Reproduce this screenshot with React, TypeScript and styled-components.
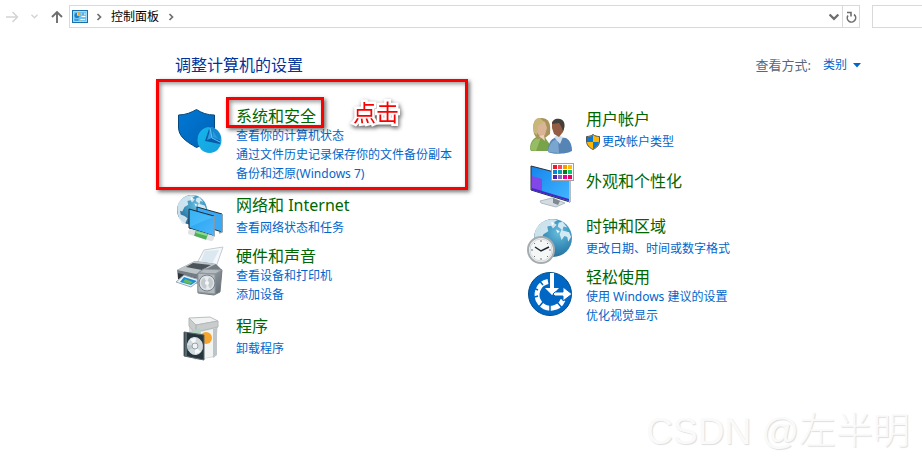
import React from "react";
import styled, { createGlobalStyle } from "styled-components";

const GlobalStyle = createGlobalStyle`
  * { box-sizing: border-box; }
  body {
    margin: 0;
    background: #fff;
    font-family: "Noto Sans", "Noto Sans CJK SC", sans-serif;
    font-size: 12px;
    overflow-x: hidden;
  }
  button, input, a { font: inherit; }
`;

const Page = styled.div`
  position: relative;
  min-height: 100vh;
  overflow: hidden;
`;

const Toolbar = styled.header`
  display: flex;
  align-items: center;
  padding-top: 5px;
`;

const IconButton = styled.button<{ $width: number }>`
  display: flex;
  align-items: center;
  justify-content: center;
  flex: none;
  width: ${(p) => p.$width}px;
  height: 22px;
  padding: 0;
  border: 0;
  background: none;
  color: #6e6e6e;
  &:disabled { color: #d4d4d4; }
`;

const AddressBar = styled.nav`
  display: flex;
  align-items: center;
  flex: 1;
  min-width: 0;
  height: 23px;
  border: 1px solid #d9d9d9;
`;

const Crumb = styled.button`
  height: 20px;
  padding: 0 4px;
  border: 0;
  background: none;
  color: #000;
  line-height: 20px;
  white-space: nowrap;
`;

const Refresh = styled.div`
  height: 21px;
  margin-left: auto;
  display: flex;
  button:last-child { border-left: 1px solid #d9d9d9; }
`;

const Search = styled.input`
  flex: none;
  width: 50px;
  height: 23px;
  margin-left: 12px;
  border: 1px solid #d9d9d9;
  border-right: 0;
  outline: 0;
`;

const Main = styled.main`
  padding: 27px 61px 0 175px;
`;

const Heading = styled.div`
  display: flex;
  align-items: center;
  justify-content: space-between;
  height: 20px;
  h1 {
    margin: 0;
    color: #003399;
    font-size: 16px;
    font-weight: 400;
    line-height: 20px;
    white-space: nowrap;
  }
`;

const ViewBy = styled.div`
  display: flex;
  align-items: center;
  gap: 12px;
  color: #5a6779;
  font-size: 13px;
  line-height: 18px;
  white-space: nowrap;
  button {
    display: flex;
    align-items: center;
    gap: 6px;
    padding: 0;
    border: 0;
    background: none;
    color: #0066cc;
    font-size: 12px;
  }
`;

const Columns = styled.div`
  display: grid;
  grid-template-columns: 350px 1fr;
  padding-top: 32px;
`;

const Column = styled.div<{ $top?: number }>`
  padding-top: ${(p) => p.$top ?? 0}px;
`;

const Category = styled.section<{ $space?: number }>`
  position: relative;
  display: flex;
  gap: 12px;
  margin-top: ${(p) => p.$space ?? 0}px;
  > svg { flex: none; margin-left: 1px; }
`;

const Body = styled.div<{ $top?: number; $gap?: number }>`
  display: flex;
  flex-direction: column;
  align-items: flex-start;
  padding-top: ${(p) => p.$top ?? 0}px;
  h2 {
    margin: 0 0 ${(p) => p.$gap ?? 0}px;
    font-size: 16px;
    font-weight: 400;
    line-height: 19px;
  }
`;

const TitleLink = styled.a`
  color: #006600;
  text-decoration: none;
  white-space: nowrap;
`;

const TaskLink = styled.a`
  display: flex;
  align-items: center;
  gap: 2px;
  color: #0066cc;
  line-height: 19px;
  text-decoration: none;
  white-space: nowrap;
`;

const Frame = styled.div`
  position: absolute;
  border: 3px solid #fa0000;
  box-shadow: 2px 2px 4px rgba(0, 0, 0, 0.55), inset 2px 2px 4px rgba(0, 0, 0, 0.4);
  pointer-events: none;
`;

const GroupFrame = styled(Frame)`
  left: -19px;
  top: -28px;
  width: 312px;
  height: 111px;
`;

const TitleFrame = styled(Frame)`
  left: 51px;
  top: -10px;
  width: 98px;
  height: 31px;
`;

const Callout = styled.span`
  position: absolute;
  left: 178px;
  top: -10px;
  color: #fa0000;
  font-size: 23px;
  line-height: 30px;
  -webkit-text-stroke: 5px #fff;
  paint-order: stroke fill;
  filter: drop-shadow(1px 2px 2px rgba(0, 0, 0, 0.65));
`;

const Watermark = styled.div`
  position: absolute;
  right: 12px;
  bottom: 7px;
  color: #fafafa;
  font-family: "Liberation Sans", "Noto Sans CJK SC", sans-serif;
  font-size: 37px;
  font-weight: 300;
  line-height: 44px;
  text-shadow: 1px 1px 1px #dedede;
  white-space: nowrap;
`;

const Chevron = ({ down = false, size = 8 }: { down?: boolean; size?: number }) => (
  <svg width={size} height={size} viewBox="0 0 8 8" fill="none" stroke="currentColor" strokeWidth="1.7">
    <path d={down ? "M.5 2l3.5 3.5L7.500 2" : "M2.500 1L5.500 4 2.500 7"} />
  </svg>
);

const PanelIcon = () => (
  <svg width="16" height="13" viewBox="0 0 16 13">
    <rect x=".5" y=".5" width="15" height="12" fill="#69c4f5" stroke="#176fae" />
    <path d="M1.500 1.500h13v10h-13z" fill="none" stroke="#9cddfc" />
    <circle cx="5" cy="5.500" r="2.800" fill="#fff" />
    <path d="M5 5.500V2.700A2.800 2.800 0 1 0 7.800 5.500z" fill="#1c7fc7" />
    <path d="M5.500 5V2A3 3 0 0 1 8.300 5z" fill="#f8a729" />
    <path d="M9.500 4h4M9.500 6.500h4M8 9.500h5" stroke="#fff" />
    <path d="M10 4h2M2.500 10h4" stroke="#1671b2" />
    <path d="M7 10h2" stroke="#f8a729" />
  </svg>
);

const SecurityIcon = () => (
  <svg width="48" height="48" viewBox="0 0 48 48">
    <defs>
      <linearGradient id="shield" x2="1" y2="1"><stop stopColor="#0079d6" /><stop offset="1" stopColor="#0062b5" /></linearGradient>
      <linearGradient id="disk" x2="1" y2="1"><stop stopColor="#15b5eb" /><stop offset="1" stopColor="#16a0dc" /></linearGradient>
    </defs>
    <path d="M2.500 8C10 8 16 5 20.500 2.500 26 6 31 8 38.500 8v12c0 10-7 16-18 20.500C9 34 2.500 29 2.500 20z" fill="url(#shield)" stroke="#06487c" />
    <ellipse cx="33.500" cy="33" rx="12" ry="13" fill="url(#disk)" />
    <path d="M33 20l2 13 10-1c-1-7-5-12-12-12z" fill="#1687cf" />
    <path d="M33 22l-4 12 15 3v-4l-9-2z" fill="#075ba8" />
    <path d="M34 23l2 8-5 2zM37 24l5 8-5-2z" fill="#2b9ae0" />
    <path d="M34 21l2 10 8 4" stroke="#5cc4f5" fill="none" />
  </svg>
);

const Globe = ({ x, y, r }: { x: number; y: number; r: number }) => (
  <g transform={`translate(${x - r} ${y - r}) scale(${r / 20})`}>
    <circle cx="20" cy="20" r="20" fill="url(#globe)" />
    <path d="M3 9C9 1 18-1 25 1l-5 3 4 2-4 4-2-3-4 1 1 5-5 3-3 6-3-1 1 5 5 2 4 3-3 7-4 1C-1 25-1 16 3 9z" fill="#ddecf4" opacity=".9" />
    <path d="M26 4l4-1 5 6-4-1-1 4 7 2 2 5-3 5-1-5-3-1-3 4-2-6 2-5-4-3z" fill="#d5e9f3" />
    <path d="M18 3l4 1-3 3zM23 11l4 2-2 2z" fill="#f5fbff" />
  </g>
);

const GlobeGradient = () => (
  <defs><radialGradient id="globe" cx=".65" cy=".35" r=".7"><stop stopColor="#68bdde" /><stop offset=".65" stopColor="#3287b4" /><stop offset="1" stopColor="#2a6b92" /></radialGradient></defs>
);

const NetworkIcon = () => (
  <svg width="48" height="48" viewBox="0 0 48 48">
    <GlobeGradient />
    <defs><linearGradient id="screen" x2="1" y2="1"><stop stopColor="#1aa3ef" /><stop offset="1" stopColor="#4fb5fb" /></linearGradient></defs>
    <Globe x={16} y={16} r={15} />
    <path d="M21 13l25 7v18l-25-8z" fill="#39a9f4" stroke="#22313b" />
    <path d="M46 20v18l-3 1" fill="none" stroke="#93a5ae" strokeWidth="1.500" />
    <path d="M13 15l25 7v20L13 34z" fill="url(#screen)" stroke="#1c2e3a" />
    <path d="M14 16l23 7-23 10z" fill="#6bd0ff" opacity=".35" />
    <path d="M38 22v20l-2 1" fill="none" stroke="#9eacb4" strokeWidth="1.500" />
    <path d="M15 38l20 6" stroke="#dee2e4" strokeWidth="6" strokeLinecap="round" />
    <path d="M19 39l12 4" stroke="#4fae5a" strokeWidth="6" />
    <path d="M20 38l11 3" stroke="#8bdb8c" strokeWidth="2" />
  </svg>
);

const HardwareIcon = () => (
  <svg width="48" height="52" viewBox="0 0 48 52">
    <defs><linearGradient id="metal" x2="1" y2="1"><stop stopColor="#acb4b8" /><stop offset="1" stopColor="#5e676e" /></linearGradient></defs>
    <path d="M20 20l8-15 19-3-8 23z" fill="#f4f8fa" stroke="#c3ccd2" />
    <path d="M29 6l14-1-7 14-12-1z" fill="#dce8ef" />
    <path d="M1 25l18-9 21 3 6 6-2 9-26 5-16-5z" fill="#737c83" />
    <path d="M1 25l18-9 21 3-20 10z" fill="#bdc4c7" />
    <path d="M17 18l18 2-9 5-16-3z" fill="#4b545a" />
    <path d="M2 28l18 5v6L2 34z" fill="#30363a" />
    <path d="M8 30l16 5-9 7-15-5z" fill="#e7f3fa" stroke="#9baab2" />
    <path d="M8 32l13 4-6 4-11-3z" fill="#198cd8" />
    <path d="M9 34l8 3-3 2-7-2z" fill="#67bc59" />
    <path d="M22 28l6-4 18 1-2 22-6 3-16-2z" fill="url(#metal)" stroke="#737c82" />
    <path d="M22 28l17 1v20l-17-2zM22 28l6-4 18 1-7 4z" fill="#b4bbc0" stroke="#8d969b" />
    <circle cx="31" cy="38" r="8" fill="#dce2e5" stroke="#778087" />
    <circle cx="31" cy="38" r="6" fill="#c3cacd" />
    <path d="M31 38l-3-6 5 0zM31 38l3 6-4 0z" fill="#e8ecee" />
    <circle cx="31" cy="38" r="2" fill="#f6f7f7" />
  </svg>
);

const ProgramsIcon = () => (
  <svg width="48" height="48" viewBox="0 0 48 48">
    <path d="M13 3l7 6h22l-3 33-19 3-7-4z" fill="#d6d9db" />
    <path d="M13 3l21-1 8 4-22 4z" fill="#f1f2f2" stroke="#bbbec0" />
    <path d="M13 3l7 7v9l-7-8zM20 10l22-4v6l-22 5z" fill="#c8cccd" stroke="#b3b8bb" />
    <path d="M20 18l18-4v27l-18 4z" fill="#f2f3f3" />
    <path d="M37 14l4-1v27l-4 3z" fill="#bec4c8" />
    <path d="M14 17l10-4 3 15-14 2z" fill="#b3d3c0" />
    <circle cx="30" cy="23" r="6" fill="#f5a42e" />
    <path d="M8 17l20 3v25L8 41z" fill="#26343c" stroke="#59656d" />
    <path d="M10 18v23" stroke="#8a989f" />
    <ellipse cx="19" cy="31" rx="8" ry="9" transform="rotate(-8 19 31)" fill="#d3dadd" />
    <path d="M19 31l-5-7 6-1zM19 31l6 6-6 2z" fill="#f5f8f9" />
    <path d="M19 31l-7 5-1-6z" fill="#b7c8cf" />
    <circle cx="19" cy="31" r="3" fill="#f0f2f3" stroke="#98a1a5" />
  </svg>
);

const UsersIcon = () => (
  <svg width="48" height="48" viewBox="0 -2 48 48">
    <path d="M4 37c0-8 4-12 10-13h4l9 13-1 2H5z" fill="#78a349" />
    <path d="M4 38c1-8 4-12 11-13l-5 14z" fill="#97bc63" />
    <path d="M8 22C6 12 8 6 15 6c8 0 10 5 9 16l-5 4-8 1z" fill="#a8935b" />
    <path d="M10 13c2-4 6-5 9-3l2 6-2 7-4 3-5-7z" fill="#d9b497" />
    <path d="M8 21C6 12 8 6 14 6l4 4-6 4-1 9z" fill="#c7b778" />
    <path d="M13 24l5-1 1 6z" fill="#f1d0b6" />
    <path d="M22 40c0-11 4-14 10-15l8 1c4 2 6 7 6 13-5 3-19 4-24 1z" fill="#5684b5" />
    <path d="M22 40c1-8 4-12 10-13l1 14z" fill="#7aa5d0" />
    <path d="M28 25l4-2 5 2-3 7z" fill="#cddfef" />
    <path d="M26 12c0-4 4-5 7-5 6 1 6 8 4 13l-4 5-5-3-2-6z" fill="#925d42" />
    <path d="M26 12c0-4 4-6 8-5 6 1 5 9 3 12l-2-5-2-3z" fill="#443f3b" />
  </svg>
);

const DisplayIcon = () => {
  const colors = ["#ea1b2d", "#ff4550", "#ff9700", "#ffbd00", "#0a85d1", "#00a2b8", "#087b22", "#00ca70", "#5226b4", "#8769c1", "#e700a1", "#f00057"];
  return (
    <svg width="48" height="48" viewBox="-1 -1 48 48">
      <defs><linearGradient id="display" x2="1" y2="1"><stop stopColor="#1484ec" /><stop offset="1" stopColor="#43b8ff" /></linearGradient></defs>
      <path d="M13 39l12-3 13 5-9 4-15-4z" fill="#d5dce1" stroke="#aebac2" />
      <path d="M26 36l7 3-2 4-5-2z" fill="#7e8992" />
      <path d="M4 4l39 10v26L4 28z" fill="url(#display)" stroke="#26333c" />
      <path d="M43 14v25l-1 1" fill="none" stroke="#b4bdc2" strokeWidth="2" />
      <path d="M5 14l10 3v14L5 28z" fill="#8147e8" />
      <path d="M5 26l37 11v2L5 28z" fill="#4326c4" />
      <rect x="24.500" y="1.500" width="22" height="17" fill="#fff" stroke="#a1a1a1" />
      {colors.map((color, index) => <rect key={color} x={26 + (index % 4) * 5} y={3 + Math.floor(index / 4) * 5} width="4" height="4" fill={color} />)}
    </svg>
  );
};

const ClockIcon = () => (
  <svg width="48" height="48" viewBox="0 0 48 48">
    <GlobeGradient />
    <Globe x={27} y={21} r={19} />
    <circle cx="15" cy="33" r="13" fill="#f5f6f6" stroke="#a5acb0" strokeWidth="2" />
    <circle cx="15" cy="33" r="11" fill="none" stroke="#d4d8da" />
    <path d="M15 23v2M15 41v2M5 33h2M23 33h2M8 26l1 1M22 26l-1 1M8 40l1-1M22 40l-1-1" stroke="#777" />
    <path d="M9 30l6 4 8-4" fill="none" stroke="#1c2730" strokeWidth="1.500" />
  </svg>
);

const EaseIcon = () => (
  <svg width="48" height="48" viewBox="0 0 48 48">
    <circle cx="24" cy="26" r="21.500" fill="#0067c5" stroke="#024d88" />
    <path d="M22 13.500A13.500 13.500 0 1 0 37 32" fill="none" stroke="#fff" strokeWidth="5" />
    <path d="M24 36v8M17 34l-5 6M12 28l-7 2M12 22l-7-3M17 17l-5-6M31 34l5 6" stroke="#0067c5" strokeWidth="1.500" />
    <path d="M24 5h4v15h5l-7 7-7-7h5z" fill="#fff" />
    <path d="M29 24h8v-5l9 7-9 7v-5h-8l-2-2z" fill="#fff" stroke="#0067c5" />
  </svg>
);

const UacShield = () => (
  <svg width="14" height="16" viewBox="0 0 14 16">
    <path d="M7 .5c2 1.500 4 2 6.500 2V7c0 4-2.500 6.500-6.500 8.500C3 13.500.5 11 .5 7V2.500C3 2.500 5 2 7 .5z" fill="#ffb600" stroke="#495465" />
    <path d="M1 3C4 3 5.500 2.500 7 1v7H1zM7 8h6C12.500 11 10 13.500 7 15z" fill="#087ad5" />
  </svg>
);

interface CategoryData {
  title: string;
  links: string[];
  Icon: React.ComponentType;
  space?: number;
  top?: number;
  gap?: number;
  shielded?: boolean;
  highlighted?: boolean;
}

const leftCategories: CategoryData[] = [
  { title: "系统和安全", links: ["查看你的计算机状态", "通过文件历史记录保存你的文件备份副本", "备份和还原(Windows 7)"], Icon: SecurityIcon, highlighted: true },
  { title: "网络和 Internet", links: ["查看网络状态和任务"], Icon: NetworkIcon, space: 11, top: 2, gap: 3 },
  { title: "硬件和声音", links: ["查看设备和打印机", "添加设备"], Icon: HardwareIcon, space: 3, top: 2 },
  { title: "程序", links: ["卸载程序"], Icon: ProgramsIcon, space: 11, top: 2, gap: 3 },
];

const rightCategories: CategoryData[] = [
  { title: "用户帐户", links: ["更改帐户类型"], Icon: UsersIcon, gap: 3, shielded: true },
  { title: "外观和个性化", links: [], Icon: DisplayIcon, space: 3, top: 11 },
  { title: "时钟和区域", links: ["更改日期、时间或数字格式"], Icon: ClockIcon, space: 8, gap: 3 },
  { title: "轻松使用", links: ["使用 Windows 建议的设置", "优化视觉显示"], Icon: EaseIcon, space: 3 },
];

const CategoryItem = ({ title, links, Icon, space, top, gap, shielded, highlighted }: CategoryData) => (
  <Category $space={space}>
    <Icon />
    <Body $top={top} $gap={gap}>
      <h2><TitleLink href="#">{title}</TitleLink></h2>
      {links.map((link) => <TaskLink href="#" key={link}>{shielded && <UacShield />}{link}</TaskLink>)}
    </Body>
    {highlighted && <><GroupFrame /><TitleFrame /><Callout>点击</Callout></>}
  </Category>
);

export default function App() {
  return (
    <Page>
      <GlobalStyle />
      <Toolbar>
        <IconButton $width={24} disabled aria-label="前进">
          <svg width="13" height="12" viewBox="0 0 13 12" fill="none" stroke="currentColor" strokeWidth="1.500"><path d="M0 6h11M6.500 1l5 5-5 5" /></svg>
        </IconButton>
        <IconButton $width={21} disabled aria-label="最近位置"><Chevron down size={7} /></IconButton>
        <IconButton $width={24} aria-label="向上">
          <svg width="12" height="13" viewBox="0 0 12 13" fill="none" stroke="currentColor" strokeWidth="1.900"><path d="M6 13V2M1 7l5-5 5 5" /></svg>
        </IconButton>
        <AddressBar aria-label="地址">
          <IconButton $width={20} aria-label="控制面板图标"><PanelIcon /></IconButton>
          <IconButton $width={17} aria-label="展开"><Chevron /></IconButton>
          <Crumb>控制面板</Crumb>
          <IconButton $width={16} aria-label="展开控制面板"><Chevron /></IconButton>
          <Refresh>
            <IconButton $width={16} aria-label="历史记录"><Chevron down size={10} /></IconButton>
            <IconButton $width={17} aria-label="刷新">
              <svg width="11" height="13" viewBox="0 0 11 13" fill="none" stroke="currentColor" strokeWidth="1.600"><path d="M8 3.500A4.200 4.200 0 1 1 2 4.500M1 1.500h4v4" /></svg>
            </IconButton>
          </Refresh>
        </AddressBar>
        <Search type="search" aria-label="搜索控制面板" />
      </Toolbar>
      <Main>
        <Heading>
          <h1>调整计算机的设置</h1>
          <ViewBy>
            <span>查看方式:</span>
            <button>类别<svg width="8" height="5" viewBox="0 0 8 5"><path d="M0 0h8L4 4.500z" fill="currentColor" /></svg></button>
          </ViewBy>
        </Heading>
        <Columns>
          <Column>{leftCategories.map((item) => <CategoryItem key={item.title} {...item} />)}</Column>
          <Column $top={3}>{rightCategories.map((item) => <CategoryItem key={item.title} {...item} />)}</Column>
        </Columns>
      </Main>
      <Watermark>CSDN @左半明</Watermark>
    </Page>
  );
}
